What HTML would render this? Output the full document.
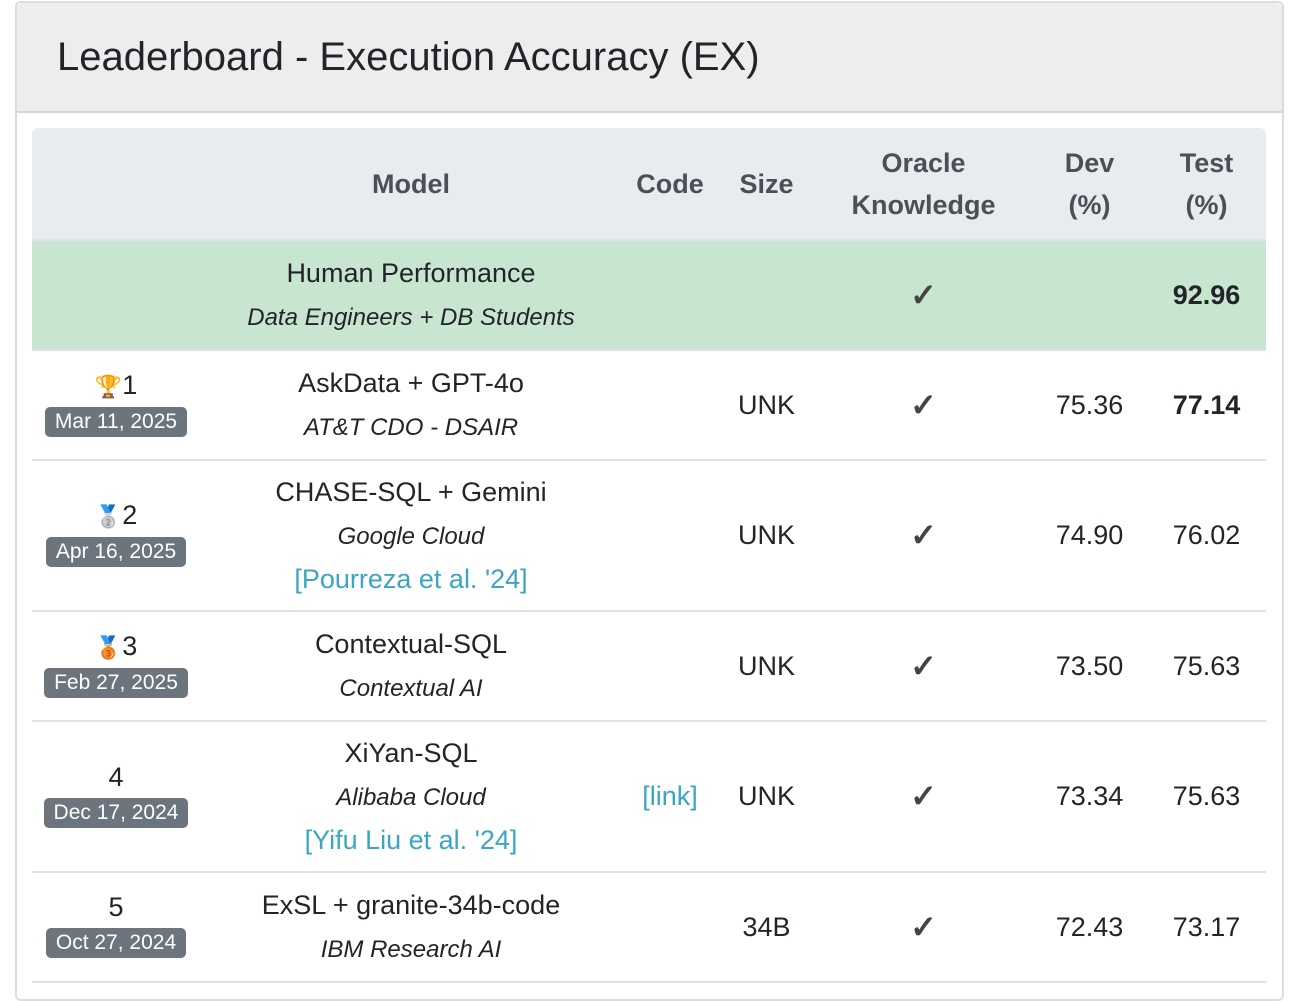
<!DOCTYPE html>
<html><head><meta charset="utf-8"><style>
*{box-sizing:border-box;margin:0;padding:0}
body{width:1294px;height:982px;overflow:hidden;background:#fff;font-family:"Liberation Sans",sans-serif;color:#212529}
.card{position:absolute;left:15px;top:1px;width:1269px;height:1000px;border:2px solid #dcdcdc;border-radius:6px;background:#fff}
.ch{height:110px;background:#ededed;border-bottom:2px solid #d6d6d6;padding-left:40px;font-size:40px;line-height:108px;color:#212529;border-radius:6px 6px 0 0}
table{position:absolute;left:15px;top:125px;width:1234px;border-collapse:collapse;table-layout:fixed}
td,th{text-align:center;vertical-align:middle;font-size:27px;padding:0}
thead th{background:#e9ecef;color:#495057;font-weight:bold;height:112px;line-height:42px;border-bottom:2px solid #dee2e6;font-size:27px}
thead tr th:first-child{border-top-left-radius:6px}
thead tr th:last-child{border-top-right-radius:6px}
tbody td{border-bottom:2px solid #dee2e6;line-height:43px}
.hum td{background:#c8e6cf}
i{font-size:24px}
a{color:#3aa6c4;text-decoration:none}
.b{display:inline-block;background:#6c757d;color:#fff;font-size:21px;line-height:30px;padding:0 10px;border-radius:5px;vertical-align:top;margin-top:1px}
.ck{color:#444;font-size:32px;font-weight:bold}
.ic{font-size:22px}
.r{line-height:39px}
</style></head><body>
<div class="card"><div class="ch">Leaderboard - Execution Accuracy (EX)</div>
<table>
<colgroup><col style="width:168px"><col style="width:422px"><col style="width:96px"><col style="width:97px"><col style="width:217px"><col style="width:115px"><col style="width:119px"></colgroup>
<thead><tr><th></th><th>Model</th><th>Code</th><th>Size</th><th>Oracle<br>Knowledge</th><th>Dev<br>(%)</th><th>Test<br>(%)</th></tr></thead>
<tbody>
<tr class="hum" style="height:110px"><td></td><td>Human Performance<br><i>Data Engineers + DB Students</i></td><td></td><td></td><td class="ck">✓</td><td></td><td><b>92.96</b></td></tr>
<tr style="height:110px"><td class="r"><span class="ic">🏆</span>1<br><span class="b">Mar 11, 2025</span></td><td>AskData + GPT-4o<br><i>AT&amp;T CDO - DSAIR</i></td><td></td><td>UNK</td><td class="ck">✓</td><td>75.36</td><td><b>77.14</b></td></tr>
<tr style="height:151px"><td class="r"><span class="ic">🥈</span>2<br><span class="b">Apr 16, 2025</span></td><td>CHASE-SQL + Gemini<br><i>Google Cloud</i><br><a>[Pourreza et al. '24]</a></td><td></td><td>UNK</td><td class="ck">✓</td><td>74.90</td><td>76.02</td></tr>
<tr style="height:110px"><td class="r"><span class="ic">🥉</span>3<br><span class="b">Feb 27, 2025</span></td><td>Contextual-SQL<br><i>Contextual AI</i></td><td></td><td>UNK</td><td class="ck">✓</td><td>73.50</td><td>75.63</td></tr>
<tr style="height:151px"><td class="r">4<br><span class="b">Dec 17, 2024</span></td><td>XiYan-SQL<br><i>Alibaba Cloud</i><br><a>[Yifu Liu et al. '24]</a></td><td><a>[link]</a></td><td>UNK</td><td class="ck">✓</td><td>73.34</td><td>75.63</td></tr>
<tr style="height:110px"><td class="r">5<br><span class="b">Oct 27, 2024</span></td><td>ExSL + granite-34b-code<br><i>IBM Research AI</i></td><td></td><td>34B</td><td class="ck">✓</td><td>72.43</td><td>73.17</td></tr>
</tbody></table></div>
</body></html>
